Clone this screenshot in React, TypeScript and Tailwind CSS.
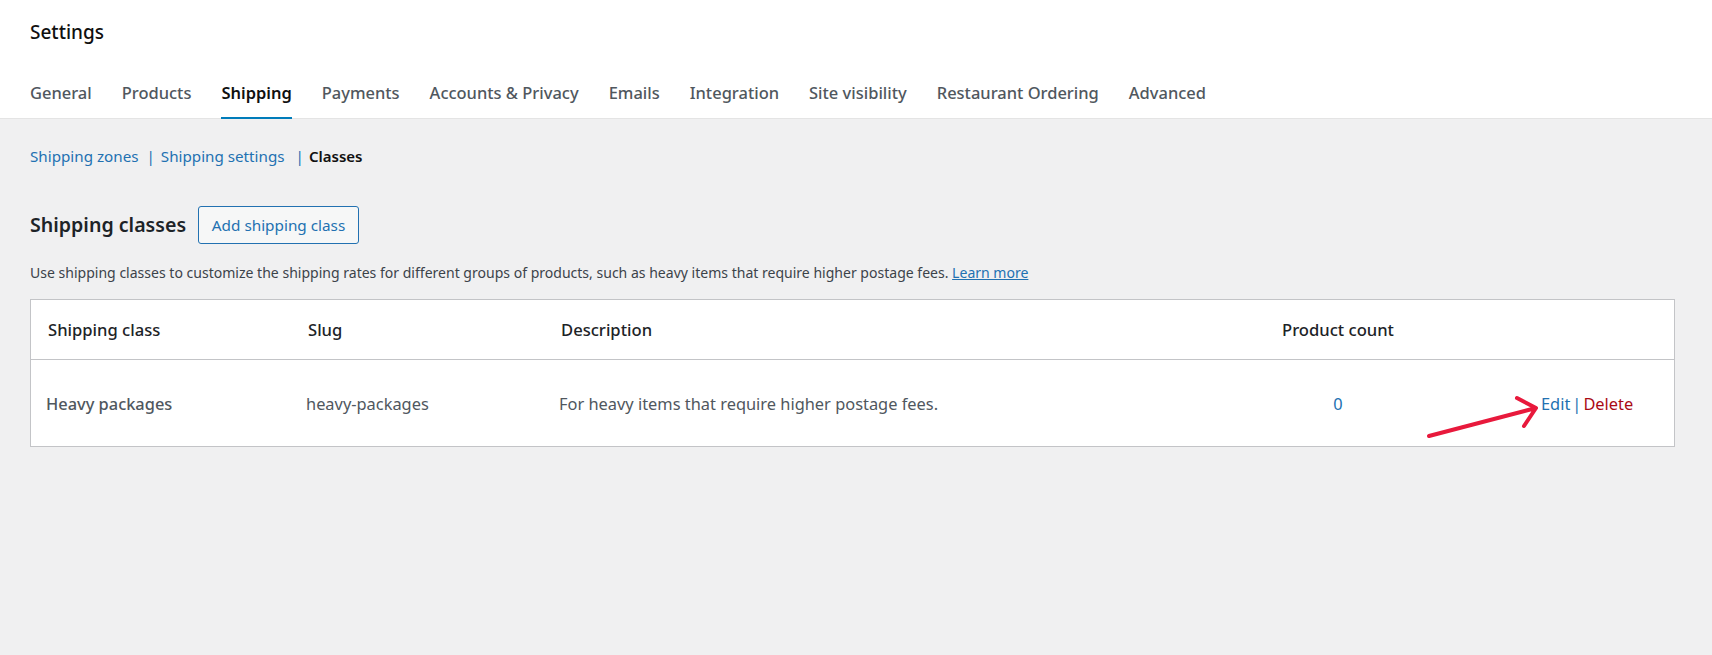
import React from 'react';

const tabs = ['General', 'Products', 'Shipping', 'Payments', 'Accounts & Privacy', 'Emails', 'Integration', 'Site visibility', 'Restaurant Ordering', 'Advanced'];

export default function App() {
  return (
    <div className="min-h-[655px] bg-[#f0f0f1] font-['Noto_Sans',sans-serif] text-[#3c434a]">
      <header className="h-[119px] bg-white pl-[30px] border-b border-[#e4e4e4]">
        <h1 className="pt-[20px] text-[19px] leading-[24px] font-medium text-[#101010]">Settings</h1>
        <nav className="mt-[30px] flex gap-[30px]">
          {tabs.map((tab) =>
            tab === 'Shipping' ? (
              <a key={tab} className="h-[45px] border-b-2 border-[#007cba] text-[16.48px] leading-[38px] font-semibold text-[#101010]">
                {tab}
              </a>
            ) : (
              <a key={tab} className="h-[45px] text-[16.48px] leading-[38px] font-medium text-[#50575e]">
                {tab}
              </a>
            )
          )}
        </nav>
      </header>

      <main className="pl-[30px] pt-[26px] pr-[37px]">
        <div className="flex h-[22px] items-center text-[15.2px] leading-[22px]">
          <a className="text-[#2271b1]">Shipping zones</a>
          <span className="ml-[8px] text-[#2271b1]">|</span>
          <a className="ml-[6px] text-[#2271b1]">Shipping settings</a>
          <span className="ml-[11px] text-[#2271b1]">|</span>
          <span className="ml-[5px] text-[15px] font-semibold text-[#101010]">Classes</span>
        </div>

        <div className="mt-[39px] flex h-[38px] items-center">
          <h2 className="text-[19.6px] font-semibold text-[#1d2327]">Shipping classes</h2>
          <button className="ml-[12px] h-[38px] w-[161px] rounded-[3px] border border-[#2271b1] bg-[#f6f7f7] text-[15.3px] text-[#2271b1]">
            Add shipping class
          </button>
        </div>

        <p className="mt-[18px] text-[14.04px] leading-[22px]">
          Use shipping classes to customize the shipping rates for different groups of products, such as heavy items that require higher postage fees.{' '}
          <a className="text-[#2271b1] underline">Learn more</a>
        </p>

        <div className="relative mt-[15px] border border-[#c3c4c7] bg-white">
          <div className="flex h-[60px] items-center border-b border-[#c3c4c7] pl-[17px] pt-[1px] text-[16.6px] font-medium text-[#1d2327]">
            <div className="w-[260px]">Shipping class</div>
            <div className="w-[253px]">Slug</div>
            <div className="w-[677px]">Description</div>
            <div className="w-[200px] text-center">Product count</div>
          </div>
          <div className="flex h-[86px] items-center pl-[15px] pt-[2px] text-[16.4px] text-[#50575e]">
            <div className="w-[260px] font-medium">Heavy packages</div>
            <div className="w-[253px]">heavy-packages</div>
            <div className="w-[679px]">For heavy items that require higher postage fees.</div>
            <div className="w-[200px] text-center text-[#2271b1]">0</div>
            <div className="ml-[103px] flex items-center">
              <a className="text-[#2271b1]">Edit</a>
              <span className="mx-[2px] text-[#2271b1]">|</span>
              <a className="text-[#aa0a14]">Delete</a>
            </div>
          </div>
          <svg className="absolute left-[1390px] top-[90px] h-[50px] w-[125px]" viewBox="0 0 125 50" fill="none" stroke="#e8193c" strokeWidth="4" strokeLinecap="round" strokeLinejoin="round">
            <path d="M8 46 L115 18 M96 8 L115 18 L103 36" />
          </svg>
        </div>
      </main>
    </div>
  );
}
